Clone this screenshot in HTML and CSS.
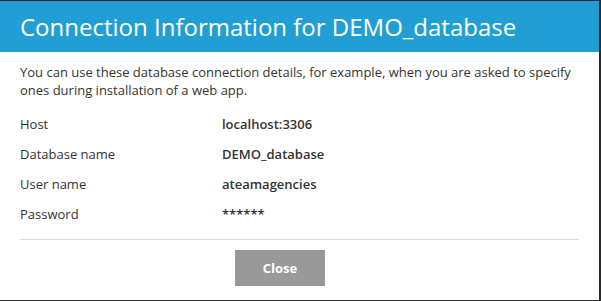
FILE: index.html
```html
<!DOCTYPE html>
<html>
<head>
<meta charset="utf-8">
<link rel="stylesheet" href="styles.css">
</head>
<body>
<div class="dialog">
  <div class="header"><h1>Connection Information for DEMO_database</h1></div>
  <div class="content">
    <p class="intro">You can use these database connection details, for example, when you are asked to specify ones during installation of a web app.</p>
    <div class="rows">
      <div class="row"><span class="label">Host</span><span class="value">localhost:3306</span></div>
      <div class="row"><span class="label">Database name</span><span class="value">DEMO_database</span></div>
      <div class="row"><span class="label">User name</span><span class="value">ateamagencies</span></div>
      <div class="row"><span class="label">Password</span><span class="value">******</span></div>
    </div>
    <div class="footer"><button class="close">Close</button></div>
  </div>
</div>
</body>
</html>
```
FILE: styles.css
```css
html, body {
  margin: 0;
  padding: 0;
  background: #2a2a2a;
  width: 601px;
  height: 301px;
  overflow: hidden;
}
body {
  padding-top: 1px;
  box-sizing: border-box;
  font-family: "Open Sans", "DejaVu Sans", sans-serif;
}
.dialog {
  width: 599px;
  height: 299px;
  background: #fff;
  display: flex;
  flex-direction: column;
}
.header {
  background: #219fd5;
  height: 51px;
  padding: 0 20px;
  display: flex;
  align-items: center;
}
.header h1 {
  margin: 0;
  color: #fff;
  font-weight: 400;
  font-size: 24px;
  line-height: 30px;
}
.content {
  padding: 11px 20px 0;
  color: #333;
  font-size: 13px;
}
.intro {
  margin: 0;
  line-height: 18px;
}
.rows {
  margin-top: 10px;
  display: flex;
  flex-direction: column;
}
.row {
  display: flex;
  height: 30px;
  align-items: center;
}
.label {
  width: 202px;
}
.value {
  font-weight: 600;
}
.footer {
  margin-top: 10px;
  border-top: 1px solid #dcdcdc;
  padding: 10px 0 0 215px;
  display: flex;
}
.close {
  width: 90px;
  height: 36px;
  background: #999;
  border: none;
  color: #fff;
  font-family: "Open Sans", "DejaVu Sans", sans-serif;
  font-size: 13px;
  font-weight: 700;
  padding: 0;
}
```
